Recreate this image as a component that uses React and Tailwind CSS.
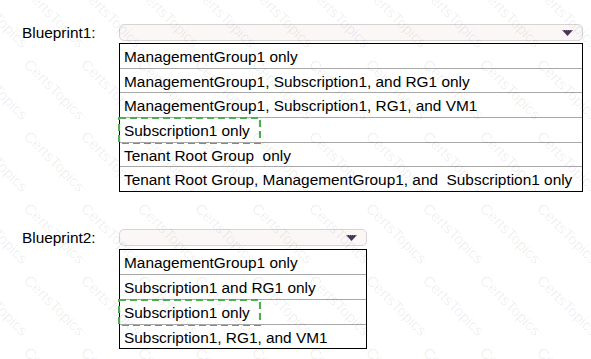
import React from "react";

const list1 = [
  { t: "ManagementGroup1 only", h: 24 },
  { t: "ManagementGroup1, Subscription1, and RG1 only", h: 23 },
  { t: "ManagementGroup1, Subscription1, RG1, and VM1", h: 24 },
  { t: "Subscription1 only", h: 24, sel: true },
  { t: "Tenant Root Group\u00a0 only", h: 23 },
  { t: "Tenant Root Group, ManagementGroup1, and\u00a0 Subscription1 only", h: 24 },
];

const list2 = [
  { t: "ManagementGroup1 only", h: 24 },
  { t: "Subscription1 and RG1 only", h: 24 },
  { t: "Subscription1 only", h: 24, sel: true },
  { t: "Subscription1, RG1, and VM1", h: 23 },
];

function Arrow() {
  return (
    <svg width="11" height="6" viewBox="0 0 11 6" className="block">
      <path d="M0 0 H11 L5.5 6 Z" fill="#4b3556" />
      <path d="M1 0.5 H10" stroke="#8a6f99" strokeWidth="0.8" strokeDasharray="1 1" />
    </svg>
  );
}

function Dropdown({ w }) {
  return (
    <div
      className="h-[17px] rounded-[5px] border border-[#d9d4d4] bg-[#fbf7f7] flex items-center justify-end pr-[9px]"
      style={{ width: w }}
    >
      <Arrow />
    </div>
  );
}

function Dashed({ w, h }) {
  return (
    <svg
      width={w}
      height={h}
      className="absolute left-[-2px] top-[-1px] pointer-events-none"
    >
      <rect
        x="1"
        y="1"
        width={w - 2}
        height={h - 2}
        fill="none"
        stroke="#4caf50"
        strokeWidth="2.2"
        strokeDasharray="7 4"
      />
    </svg>
  );
}

function List({ items, w }) {
  return (
    <div className="border border-black bg-white" style={{ width: w }}>
      {items.map((it, i) => (
        <div
          key={i}
          className={
            "relative flex items-center pl-[4px] pt-[2px] whitespace-nowrap " +
            (i > 0 ? "border-t border-[#a8a8a8]" : "")
          }
          style={{ height: it.h + (i > 0 ? 1 : 0) }}
        >
          {it.t}
          {it.sel && <Dashed w={143} h={it.h + 3} />}
        </div>
      ))}
    </div>
  );
}

function Watermark() {
  const marks = [];
  for (let r = 0; r < 7; r++) {
    for (let c = 0; c < 12; c++) {
      marks.push({
        x: -30 + c * 57,
        y: -18 + r * 72,
      });
    }
  }
  return (
    <div className="absolute inset-0 overflow-hidden pointer-events-none">
      {marks.map((m, i) => (
        <span
          key={i}
          className="absolute text-[15px] text-[rgba(0,0,0,0.07)] origin-left rotate-45 whitespace-nowrap"
          style={{ left: m.x, top: m.y }}
        >
          CertsTopics
        </span>
      ))}
    </div>
  );
}

export default function App() {
  return (
    <div
      className="relative w-[591px] h-[359px] bg-white text-black text-[15.4px] leading-none overflow-hidden"
      style={{ fontFamily: '"Liberation Sans", Arial, sans-serif' }}
    >
      <div className="flex flex-col pt-[24px]">
        <div className="flex items-center">
          <div className="w-[119px] pl-[22px] pt-[1px]">Blueprint1:</div>
          <Dropdown w={464} />
        </div>
        <div className="pl-[119px] mt-[2px]">
          <List items={list1} w={464} />
        </div>
        <div className="flex items-center mt-[37px]">
          <div className="w-[119px] pl-[22px] pt-[1px]">Blueprint2:</div>
          <Dropdown w={248} />
        </div>
        <div className="pl-[119px] mt-[3px]">
          <List items={list2} w={248} />
        </div>
      </div>
      <Watermark />
    </div>
  );
}
